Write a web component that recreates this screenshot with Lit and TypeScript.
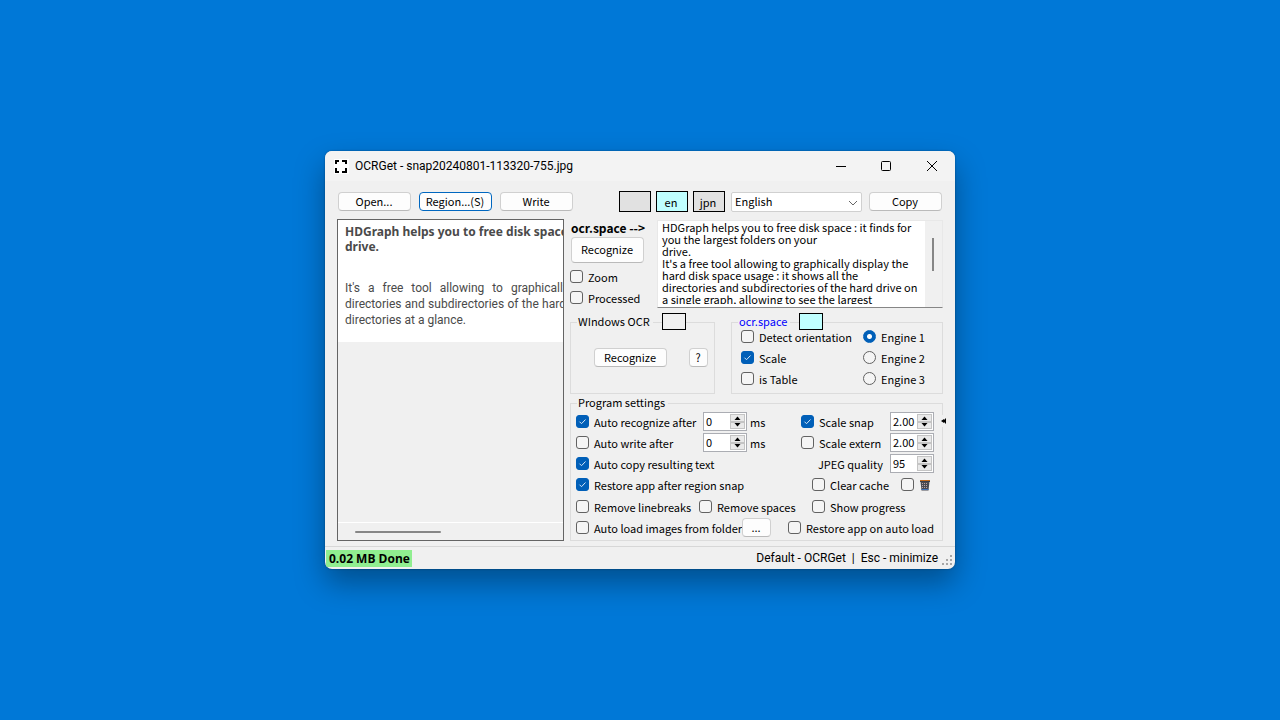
import { LitElement, html, css, svg, nothing } from "lit";
import { customElement, property } from "lit/decorators.js";

const RESULT_TEXT = `HDGraph helps you to free disk space : it finds for
you the largest folders on your
drive.
It's a free tool allowing to graphically display the
hard disk space usage : it shows all the
directories and subdirectories of the hard drive on
a single graph, allowing to see the largest
directories at a glance.`;

const controls = css`
  * {
    box-sizing: border-box;
  }
  button,
  input,
  select,
  textarea {
    font: inherit;
    color: inherit;
    margin: 0;
  }
  .btn {
    display: flex;
    align-items: center;
    justify-content: center;
    width: 73px;
    height: 19px;
    padding: 0 1px 2px 0;
    background: #fdfdfd;
    border: 1px solid #d0d0d0;
    border-bottom-color: #bababa;
    border-radius: 4px;
  }
  .btn.default {
    border-color: #0067c0;
  }
  .btn.tall {
    height: 26px;
  }
  .btn.help {
    width: 19px;
  }
  .btn.browse {
    width: 29px;
  }
`;

@customElement("check-option")
class CheckOption extends LitElement {
  @property() label = "";
  @property() kind = "checkbox";
  @property() group = "";
  @property({ type: Boolean }) on = false;

  static styles = css`
    :host {
      display: block;
      white-space: nowrap;
    }
    .option {
      display: flex;
      align-items: center;
      gap: 5px;
      height: 21px;
    }
    .box {
      appearance: none;
      flex: none;
      width: 13px;
      height: 13px;
      margin: 0;
      border: 1px solid #626262;
      border-radius: 3px;
      background: #f5f5f5;
    }
    .box:checked {
      border-color: #005fb8;
      background: #005fb8
        url("data:image/svg+xml,%3Csvg xmlns='http://www.w3.org/2000/svg' viewBox='0 0 11 11'%3E%3Cpath d='M2.5 5.7l2 2 4-4.2' fill='none' stroke='%23d5e6f6' stroke-width='1'/%3E%3C/svg%3E");
    }
    .box[type="radio"] {
      border-radius: 50%;
    }
    .box[type="radio"]:checked {
      background: radial-gradient(circle, #ffffff 0 2px, #005fb8 3px);
    }
  `;

  render() {
    return html`<label class="option">
      <input class="box" type=${this.kind} name=${this.group || nothing} .checked=${this.on}
        aria-label=${this.label} />
      <slot>${this.label}</slot>
    </label>`;
  }
}

@customElement("number-spinner")
class NumberSpinner extends LitElement {
  @property() value = "0";
  @property() label = "";

  static styles = [
    controls,
    css`
      :host {
        display: block;
      }
      .spinner {
        display: flex;
        width: 44px;
        height: 19px;
        padding: 1px;
        background: #ffffff;
        border: 1px solid #abadb3;
      }
      .field {
        flex: 1;
        min-width: 0;
        height: 14px;
        padding: 0 1px;
        border: 0;
        background: none;
        line-height: 14px;
      }
      .steps {
        display: grid;
        grid-template-rows: 1fr 1fr;
        width: 15px;
      }
      .step {
        display: flex;
        align-items: center;
        justify-content: center;
        padding: 0;
        background: #e9e9e9;
        border: 1px solid #c4c4c4;
      }
      .glyph {
        flex: none;
        width: 7px;
        height: 4px;
      }
    `,
  ];

  render() {
    return html`<div class="spinner">
      <input class="field" type="text" inputmode="decimal" aria-label=${this.label} .value=${this.value} />
      <div class="steps">
        <button class="step" aria-label="Increase">
          <svg class="glyph" viewBox="0 0 7 4"><path d="M0.500 4L3.500 0.500L6.500 4z" /></svg>
        </button>
        <button class="step" aria-label="Decrease">
          <svg class="glyph" viewBox="0 0 7 4"><path d="M0.500 0L3.500 3.500L6.500 0z" /></svg>
        </button>
      </div>
    </div>`;
  }
}

@customElement("app-root")
class AppRoot extends LitElement {
  static styles = [
    controls,
    css`
      :host {
        display: flex;
        align-items: center;
        justify-content: center;
        min-height: 100vh;
        background: #0078d7;
        color: #000000;
        font: 11px/12px "Noto Sans CJK JP", "Noto Sans", sans-serif;
      }
      .window {
        display: flex;
        flex-direction: column;
        width: min(630px, 100%);
        background: #f0f0f0;
        border-radius: 7px;
        box-shadow: 0 0 2px rgba(0, 0, 0, 0.4), 0 14px 30px rgba(0, 0, 0, 0.34);
        overflow: hidden;
      }
      .titlebar {
        display: flex;
        align-items: center;
        height: 30px;
        padding-left: 9px;
        gap: 6px;
        background: #f3f3f3;
        font: 12px/16px Roboto, "Open Sans", sans-serif;
      }
      .title {
        flex: 1;
        margin: 0;
        font: inherit;
      }
      .captions {
        display: flex;
      }
      .caption {
        display: flex;
        align-items: center;
        justify-content: center;
        width: 46px;
        height: 28px;
        padding: 0;
        border: 0;
        background: none;
      }
      .toolbar {
        display: flex;
        align-items: center;
        gap: 8px;
        padding: 10px 13px 7px;
      }
      .languages {
        display: flex;
        gap: 5px;
        margin-left: auto;
      }
      .lang {
        width: 32px;
        height: 21px;
        padding: 0 2px 0 0;
        border: 1px solid #000000;
        background: #e1e1e1;
      }
      .lang.active {
        background: #c0ffff;
      }
      .pick {
        position: relative;
        display: flex;
        width: 131px;
        margin: 0 -1px 0 -2px;
      }
      .select {
        appearance: none;
        width: 100%;
        height: 20px;
        padding: 0 3px 2px;
        line-height: 16px;
        background: #ffffff;
        border: 1px solid #d0d0d0;
        border-radius: 2px;
      }
      .chevron {
        position: absolute;
        right: 4px;
        top: 8px;
        pointer-events: none;
      }
      .body {
        display: grid;
        grid-template-columns: 227px 1fr;
        gap: 6px;
        padding: 0 12px 5px;
      }
      .preview {
        display: flex;
        flex-direction: column;
        min-width: 0;
        border: 1px solid #646464;
        overflow: hidden;
      }
      .snap {
        height: 122px;
        padding: 4px 0 0 7px;
        background: #ffffff;
        color: #4a4a4a;
        font: 12px/16px Roboto, "Open Sans", sans-serif;
        white-space: nowrap;
      }
      .snap-head {
        margin: 0 0 26px;
        font: 700 12px/15px "Noto Sans", sans-serif;
      }
      .snap-text {
        width: 396px;
        margin: 0;
      }
      .spread {
        display: block;
        white-space: normal;
        text-align-last: justify;
      }
      .hscroll {
        height: 18px;
        margin-top: auto;
        padding: 8px 17px;
        border-top: 1px solid #ffffff;
      }
      .hthumb {
        width: 86px;
        height: 2px;
        background: #868686;
        border-radius: 1px;
      }
      .settings {
        display: flex;
        flex-direction: column;
        min-width: 0;
      }
      .result-row {
        display: grid;
        grid-template-columns: 81px 1fr;
        gap: 6px;
        height: 88px;
      }
      .engine {
        margin: 0;
        padding: 3px 0 3px 1px;
        font-size: 12px;
        font-weight: 700;
        white-space: nowrap;
      }
      .engine + .btn {
        margin: 0 0 3px 1px;
      }
      .result {
        display: flex;
        min-width: 0;
        margin-top: 1px;
        background: #ffffff;
        border: 1px solid #e8e8e8;
        border-bottom-color: #868686;
      }
      .output {
        flex: 1;
        min-width: 0;
        height: 83px;
        padding: 0 1px 0 4px;
        border: 0;
        background: none;
        resize: none;
        overflow: hidden;
        line-height: 12px;
      }
      .vscroll {
        width: 17px;
        padding: 17px 8px 0 7px;
        background: #f0f0f0;
      }
      .vthumb {
        height: 33px;
        background: #868686;
      }
      .groups {
        display: grid;
        grid-template-columns: 145px 1fr;
        gap: 16px;
        margin-top: 15px;
      }
      .group {
        min-width: 0;
        margin: 0;
        padding: 0 8px;
        border: 1px solid #dcdcdc;
      }
      .legend {
        float: left;
        display: flex;
        align-items: center;
        gap: 9px;
        height: 18px;
        margin: -11px 0 -4px -2px;
        padding: 0;
      }
      .legend-text {
        padding: 0 3px 0 1px;
        background: #f0f0f0;
      }
      .legend.link {
        color: #0000ff;
      }
      .swatch {
        width: 24px;
        height: 17px;
        border: 1px solid #000000;
        background: #f0f0f0;
      }
      .swatch.active {
        background: #c0ffff;
      }
      .windows-row {
        clear: both;
        display: flex;
        justify-content: space-between;
        padding: 22px 0 0 15px;
        margin-right: -2px;
      }
      .space-grid {
        clear: both;
        display: grid;
        grid-template-columns: 122px 1fr;
        height: 67px;
        padding-left: 1px;
        align-content: start;
      }
      .program {
        position: relative;
        margin-top: 9px;
        padding: 0 8px 2px 5px;
      }
      .program .legend {
        padding-left: 3px;
      }
      .expander {
        position: absolute;
        top: 11px;
        right: -5px;
        display: flex;
        padding: 3px 0;
        border: 0;
        background: #f0f0f0;
      }
      .rows {
        clear: both;
        padding-top: 4px;
      }
      .rows + .rows {
        padding-top: 1px;
      }
      .row {
        display: grid;
        align-items: center;
        height: 21px;
      }
      .row.timed {
        grid-template-columns: 127px 98px 89px 1fr;
      }
      .row.plain {
        grid-template-columns: 123px 113px 89px 1fr;
      }
      .row.load {
        grid-template-columns: 166px 46px 1fr;
      }
      .wide {
        grid-column: span 2;
      }
      .timed-value {
        display: flex;
        align-items: center;
        gap: 3px;
      }
      .quality {
        justify-self: end;
        padding-right: 7px;
      }
      .clip {
        overflow: hidden;
      }
      .status {
        display: flex;
        align-items: center;
        justify-content: space-between;
        height: 23px;
        padding: 0 2px 0 1px;
        border-top: 1px solid #d7d7d7;
        font: 12px/17px Roboto, "Open Sans", sans-serif;
      }
      .done {
        padding: 0 2px 0 3px;
        background: #90ee90;
        font: 700 12px/17px "Open Sans", sans-serif;
      }
      .hints {
        display: flex;
        gap: 6px;
        margin-left: auto;
        padding-right: 4px;
      }
      .grip {
        align-self: flex-end;
        margin-bottom: 3px;
        fill: #a6a6a6;
      }
    `,
  ];

  private caption(name: string, shape: unknown) {
    return html`<button class="caption" aria-label=${name}>
      <svg width="12" height="12" viewBox="0 0 12 12" fill="none" stroke="#000">${shape}</svg>
    </button>`;
  }

  render() {
    return html`<main class="window">
      <header class="titlebar">
        <svg width="15" height="15" viewBox="0 0 15 15">
          <rect width="15" height="15" fill="#fff" />
          <path d="M2 5V2H5M8 2H12V5M12 9V13H8M5 13H2V9" fill="none" stroke="#000" stroke-width="2" />
        </svg>
        <h1 class="title">OCRGet - snap20240801-113320-755.jpg</h1>
        <div class="captions">
          ${this.caption("Minimize", svg`<path d="M2 6.500H12" />`)}
          ${this.caption("Maximize", svg`<rect x="1.500" y="1.500" width="9" height="9" rx="1" />`)}
          ${this.caption("Close", svg`<path d="M1 1L11 11M11 1L1 11" />`)}
        </div>
      </header>
      <nav class="toolbar">
        <button class="btn">Open...</button>
        <button class="btn default">Region...(S)</button>
        <button class="btn">Write</button>
        <div class="languages">
          <button class="lang" aria-label="No language"></button>
          <button class="lang active">en</button>
          <button class="lang">jpn</button>
        </div>
        <div class="pick">
          <select class="select" aria-label="Language"><option>English</option></select>
          <svg class="chevron" width="10" height="6" viewBox="0 0 10 6" fill="none" stroke="#666">
            <path d="M1 1L5 5L9 1" />
          </svg>
        </div>
        <button class="btn">Copy</button>
      </nav>
      <div class="body">
        <section class="preview">
          <div class="snap">
            <p class="snap-head">HDGraph helps you to free disk space : it finds for you<br />drive.</p>
            <p class="snap-text">
              <span class="spread">It's a free tool allowing to graphically display the hard disk space</span>
              <span class="spread">directories and subdirectories of the hard drive on a single graph, allowing</span>
              directories at a glance.
            </p>
          </div>
          <div class="hscroll"><div class="hthumb"></div></div>
        </section>
        <section class="settings">
          <div class="result-row">
            <div>
              <p class="engine">ocr.space --&gt;</p>
              <button class="btn tall">Recognize</button>
              <check-option label="Zoom"></check-option>
              <check-option label="Processed"></check-option>
            </div>
            <div class="result">
              <textarea class="output" aria-label="Recognized text" .value=${RESULT_TEXT}></textarea>
              <div class="vscroll"><div class="vthumb"></div></div>
            </div>
          </div>
          <div class="groups">
            <fieldset class="group">
              <legend class="legend"><span class="legend-text">WIndows OCR</span><span class="swatch"></span></legend>
              <div class="windows-row">
                <button class="btn">Recognize</button>
                <button class="btn help">?</button>
              </div>
            </fieldset>
            <fieldset class="group">
              <legend class="legend link">
                <span class="legend-text">ocr.space</span><span class="swatch active"></span>
              </legend>
              <div class="space-grid">
                <check-option label="Detect orientation"></check-option>
                <check-option kind="radio" group="engine" label="Engine 1" on></check-option>
                <check-option label="Scale" on></check-option>
                <check-option kind="radio" group="engine" label="Engine 2"></check-option>
                <check-option label="is Table"></check-option>
                <check-option kind="radio" group="engine" label="Engine 3"></check-option>
              </div>
            </fieldset>
          </div>
          <fieldset class="group program">
            <legend class="legend"><span class="legend-text">Program settings</span></legend>
            <button class="expander" aria-label="Collapse settings">
              <svg width="6" height="6" viewBox="0 0 6 6"><path d="M0 3L3 1V2L5 0V6L3 4V5z" /></svg>
            </button>
            <div class="rows">
              <div class="row timed">
                <check-option label="Auto recognize after" on></check-option>
                <div class="timed-value"><number-spinner label="Recognize delay"></number-spinner>ms</div>
                <check-option label="Scale snap" on></check-option>
                <number-spinner label="Snap scale" value="2.00"></number-spinner>
              </div>
              <div class="row timed">
                <check-option label="Auto write after"></check-option>
                <div class="timed-value"><number-spinner label="Write delay"></number-spinner>ms</div>
                <check-option label="Scale extern"></check-option>
                <number-spinner label="Extern scale" value="2.00"></number-spinner>
              </div>
              <div class="row timed">
                <check-option class="wide" label="Auto copy resulting text" on></check-option>
                <span class="quality">JPEG quality</span>
                <number-spinner label="JPEG quality" value="95"></number-spinner>
              </div>
              <div class="row plain">
                <check-option class="wide" label="Restore app after region snap" on></check-option>
                <check-option label="Clear cache"></check-option>
                <check-option label="Delete"
                  ><svg width="12" height="12" viewBox="0 0 12 12">
                    <path d="M1.500 2.500H10.500L9.500 11.500H2.500z" fill="#4a4a52" />
                    <path d="M1 1.500H11" stroke="#c56a1c" />
                    <path d="M1 2.500H11" stroke="#3b3f4c" />
                    <path d="M3 4.500H9M3 6.500H9M3 8.500H9" stroke="#b9a3a6" stroke-dasharray="1 1" />
                    <path d="M2.500 10.500H9.500" stroke="#3f6fb5" />
                  </svg></check-option>
              </div>
            </div>
            <div class="rows">
              <div class="row plain">
                <check-option label="Remove linebreaks"></check-option>
                <check-option label="Remove spaces"></check-option>
                <check-option label="Show progress"></check-option>
              </div>
              <div class="row load">
                <check-option class="clip" label="Auto load images from folder"></check-option>
                <button class="btn browse">...</button>
                <check-option label="Restore app on auto load"></check-option>
              </div>
            </div>
          </fieldset>
        </section>
      </div>
      <footer class="status">
        <span class="done">0.02 MB Done</span>
        <span class="hints"><span>Default - OCRGet</span><span>|</span><span>Esc - minimize</span></span>
        <svg class="grip" width="11" height="11" viewBox="0 0 11 11">
          <path d="M8 0h2v2H8zM8 4h2v2H8zM4 4h2v2H4zM8 8h2v2H8zM4 8h2v2H4zM0 8h2v2H0z" />
        </svg>
      </footer>
    </main>`;
  }
}
